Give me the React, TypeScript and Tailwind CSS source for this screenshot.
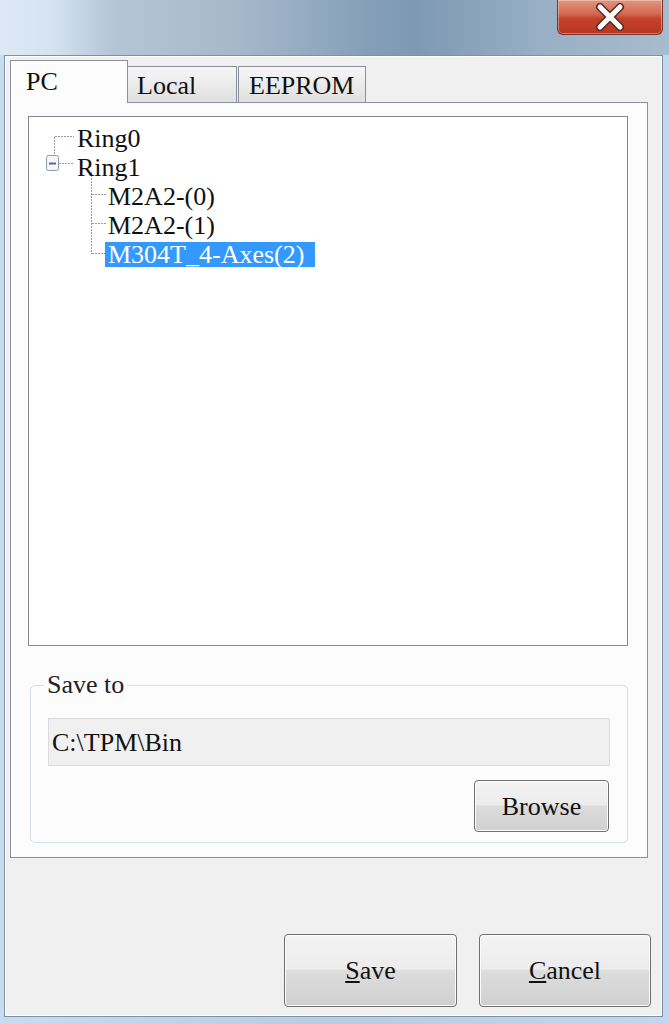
import React from "react";

function TreeLines() {
  return (
    <svg className="absolute left-0 top-0" width="300" height="160" viewBox="0 0 300 160">
      <g stroke="#9a9a9a" strokeWidth="1" strokeDasharray="2 1" fill="none" shapeRendering="crispEdges">
        <line x1="25.5" y1="19.5" x2="25.5" y2="37" />
        <line x1="25.5" y1="19.5" x2="45" y2="19.5" />
        <line x1="30" y1="46.5" x2="45" y2="46.5" />
        <line x1="62.5" y1="55" x2="62.5" y2="136.5" />
        <line x1="62.5" y1="77.5" x2="77" y2="77.5" />
        <line x1="62.5" y1="106.5" x2="77" y2="106.5" />
        <line x1="62.5" y1="136.5" x2="77" y2="136.5" />
      </g>
      <rect x="17.5" y="38.5" width="12" height="15" rx="2" fill="#f4f6f8" stroke="#8f9aa6" />
      <line x1="20" y1="46.5" x2="27" y2="46.5" stroke="#4a6db0" strokeWidth="2" />
    </svg>
  );
}

function WinButton({ label, className }: { label: React.ReactNode; className: string }) {
  return (
    <div
      className={`flex items-center justify-center rounded-[4px] border border-[#707070] bg-[linear-gradient(#f3f3f3_0%,#ececec_48%,#dddddd_50%,#d0d0d0_100%)] shadow-[inset_0_0_0_1px_#fbfbfb] text-[26px] text-[#111] ${className}`}
    >
      {label}
    </div>
  );
}

export default function App() {
  return (
    <div className="w-[669px] h-[1024px] overflow-hidden flex flex-col font-['Liberation_Serif','DejaVu_Serif',serif] bg-[linear-gradient(90deg,#c8dcf0_0%,#b7cde3_50%,#c3d8ee_100%)]">
      {/* Title bar */}
      <div className="h-[55px] shrink-0 flex justify-end pr-[6px] bg-[linear-gradient(90deg,#dde9f5_0%,#d5e3f1_8%,#b4c5d6_17%,#a6b9cb_35%,#859fb9_55%,#7e99b4_62%,#97aec4_80%,#a8bccf_100%)]">
        <div className="w-[106px] h-[35px] rounded-b-[6px] border border-t-0 border-[#7a3427] bg-[linear-gradient(#e2957f_0%,#d46a52_40%,#c4422a_55%,#b93522_100%)] shadow-[inset_0_0_0_1px_rgba(255,255,255,0.35)] flex items-center justify-center">
          <svg width="36" height="28" viewBox="0 0 36 28">
            <path d="M8 4 L28 24 M28 4 L8 24" stroke="#5a2a22" strokeWidth="8" strokeLinecap="round" />
            <path d="M8 4 L28 24 M28 4 L8 24" stroke="#ffffff" strokeWidth="5" strokeLinecap="round" />
          </svg>
        </div>
      </div>

      {/* Client area */}
      <div className="ml-[4px] mr-[6px] h-[962px] shrink-0 border border-[#7f90a2] bg-[#f0f0f0] shadow-[inset_0_0_0_1px_#ffffff] flex flex-col">
        {/* Tab headers */}
        <div className="ml-[5px] mt-[4px] flex items-end h-[42px]">
          <div className="relative z-10 -mb-px h-[43px] w-[118px] border border-b-0 border-[#8e9099] bg-[#fcfcfc] pl-[15px] pt-[6px] text-[26px] leading-[30px] text-[#111]">
            PC
          </div>
          <div className="h-[36px] w-[110px] -ml-px border border-b-0 border-[#8e9099] bg-[linear-gradient(#f6f6f6,#e0e0e0)] pl-[9px] pt-[4px] text-[26px] leading-[30px] text-[#111]">
            Local
          </div>
          <div className="h-[36px] w-[128px] ml-px border border-b-0 border-[#8e9099] bg-[linear-gradient(#f6f6f6,#e0e0e0)] pl-[10px] pt-[4px] text-[26px] leading-[30px] text-[#111]">
            EEPROM
          </div>
        </div>

        {/* Tab pane */}
        <div className="ml-[5px] mr-[14px] h-[756px] border border-[#8e9099] bg-[#fcfcfc] flex flex-col pt-[13px]">
          {/* Tree view */}
          <div className="relative ml-[17px] mr-[19px] h-[530px] border border-[#828790] bg-white">
            <TreeLines />
            <div className="relative flex flex-col pt-[7px] text-[26px] leading-[29px] text-[#111]">
              <div className="h-[29px] pl-[48px]">Ring0</div>
              <div className="h-[29px] pl-[48px]">Ring1</div>
              <div className="h-[29px] pl-[79px]">M2A2-(0)</div>
              <div className="h-[29px] pl-[79px]">M2A2-(1)</div>
              <div className="h-[29px] pl-[76px] flex items-center">
                <span className="bg-[#3399ff] text-white px-[3px] h-[25px] leading-[25px] w-[210px]">M304T_4-Axes(2)</span>
              </div>
            </div>
          </div>

          {/* Save to group */}
          <fieldset className="ml-[19px] mr-[19px] mt-[26px] rounded-[5px] border border-[#d5dfe5] px-[17px] pb-[10px] flex flex-col">
            <legend className="ml-[-4px] px-[3px] text-[26px] leading-[26px] text-[#222]">Save to</legend>
            <div className="mt-[20px] h-[48px] border border-[#d9dcdf] bg-[#f0f0f0] pl-[3px] flex items-center text-[26px] text-[#111]">
              C:\TPM\Bin
            </div>
            <div className="mt-[14px] flex justify-end mr-[1px]">
              <WinButton label="Browse" className="w-[135px] h-[52px]" />
            </div>
          </fieldset>
        </div>

        {/* Bottom buttons */}
        <div className="mt-[76px] flex justify-end gap-[22px] mr-[11px]">
          <WinButton
            label={
              <span>
                <span className="underline underline-offset-2">S</span>ave
              </span>
            }
            className="w-[173px] h-[73px]"
          />
          <WinButton
            label={
              <span>
                <span className="underline underline-offset-2">C</span>ancel
              </span>
            }
            className="w-[172px] h-[73px]"
          />
        </div>
      </div>
    </div>
  );
}
